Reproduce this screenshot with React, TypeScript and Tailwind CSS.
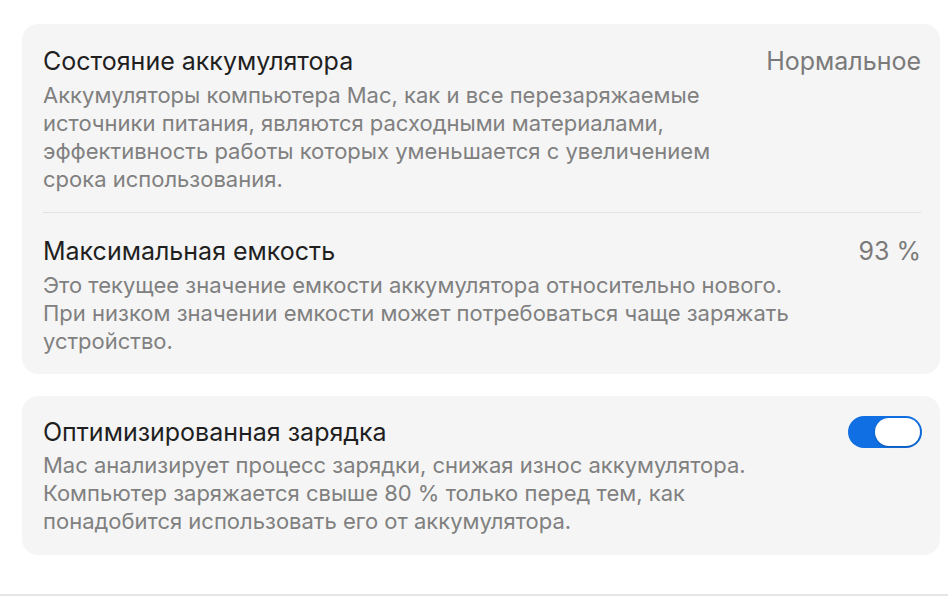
const font = { fontFamily: "Inter, 'Noto Sans', sans-serif" };

function Row({ title, value, lines, gap = "mt-[5px]" }: { title: string; value?: React.ReactNode; lines: string[]; gap?: string }) {
  return (
    <div>
      <div className="flex items-center justify-between">
        <h3 className="text-[25px] leading-[30px] text-[#1f1f1f]">{title}</h3>
        {value}
      </div>
      <p className={`${gap} text-[22px] leading-[28px] text-[#808080]`}>
        {lines.map((l, i) => (
          <span key={i} className="block">{l}</span>
        ))}
      </p>
    </div>
  );
}

function Toggle() {
  return (
    <div className="w-[74px] h-[32px] rounded-full bg-[#0f6fe3] p-[2px] flex justify-end">
      <div className="w-[45px] h-[28px] rounded-full bg-white shadow-[0_1px_2px_rgba(0,0,0,0.25)]" />
    </div>
  );
}

export default function App() {
  return (
    <div style={font} className="w-[948px] h-[606px] bg-white flex flex-col overflow-hidden">
      <div className="flex-1 pl-[22px] pr-[8px] pt-[24px] flex flex-col gap-[22px]">
        <div className="bg-[#f5f5f5] rounded-[16px] pl-[21px] pr-[19px] pt-[22px] pb-[19px]">
          <Row
            title="Состояние аккумулятора"
            value={<span className="text-[25px] leading-[30px] text-[#7a7a7a]">Нормальное</span>}
            lines={[
              "Аккумуляторы компьютера Mac, как и все перезаряжаемые",
              "источники питания, являются расходными материалами,",
              "эффективность работы которых уменьшается с увеличением",
              "срока использования.",
            ]}
          />
          <div className="h-px bg-[#e2e2e2] mt-[19px] mb-[23px]" />
          <Row
            title="Максимальная емкость"
            value={<span className="text-[25px] leading-[30px] text-[#7a7a7a]">93 %</span>}
            lines={[
              "Это текущее значение емкости аккумулятора относительно нового.",
              "При низком значении емкости может потребоваться чаще заряжать",
              "устройство.",
            ]}
          />
        </div>
        <div className="bg-[#f5f5f5] rounded-[16px] pl-[21px] pr-[18px] pt-[20px] pb-[20px]">
          <Row
            title="Оптимизированная зарядка"
            value={<Toggle />}
            gap="mt-[3px]"
            lines={[
              "Mac анализирует процесс зарядки, снижая износ аккумулятора.",
              "Компьютер заряжается свыше 80 % только перед тем, как",
              "понадобится использовать его от аккумулятора.",
            ]}
          />
        </div>
      </div>
      <div className="h-[2px] bg-[#e6e6e6] mb-[10px]" />
    </div>
  );
}
